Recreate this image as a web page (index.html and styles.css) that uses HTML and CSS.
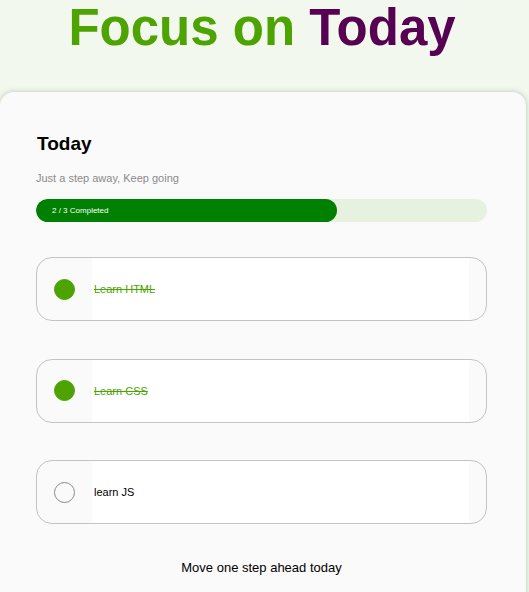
FILE: index.html
```html
<!DOCTYPE html>
<html>
<head>
<meta charset="utf-8">
<link rel="stylesheet" href="styles.css">
</head>
<body>
<h1 class="title"><span class="green">Focus on</span> <span class="purple">Today</span></h1>
<main class="card">
  <h2 class="card-title">Today</h2>
  <p class="subtitle">Just a step away, Keep going</p>
  <div class="progress">
    <div class="progress-fill" style="width: 66.67%"><span class="progress-label">2 / 3 Completed</span></div>
  </div>
  <div class="tasks">
    <div class="task done">
      <span class="check"></span>
      <div class="task-input">Learn HTML</div>
    </div>
    <div class="task done">
      <span class="check"></span>
      <div class="task-input">Learn CSS</div>
    </div>
    <div class="task">
      <span class="check"></span>
      <div class="task-input">learn JS</div>
    </div>
  </div>
  <p class="quote">Move one step ahead today</p>
</main>
</body>
</html>
```
FILE: styles.css
```css
html, body {
  margin: 0;
  padding: 0;
}
body {
  background: #f2f8ee;
  font-family: "Liberation Sans", Arial, sans-serif;
  height: 592px;
  overflow: hidden;
}
.title {
  margin: 0;
  padding-top: 0;
  width: 524px;
  text-align: center;
  font-size: 51px;
  line-height: 56px;
  font-weight: 700;
  height: 92px;
}
.green { color: #4da300; }
.purple { color: #560152; }
.card {
  width: 526px;
  box-sizing: border-box;
  background: #fafafa;
  border-radius: 14px 14px 0 0;
  box-shadow: 0 0 4px 1px rgba(120, 140, 110, 0.35);
  padding: 40px 39px 40px 36px;
  min-height: 520px;
}
.card-title {
  margin: 0 0 0 1px;
  font-size: 19px;
  line-height: 24px;
  font-weight: 700;
  color: #000;
}
.subtitle {
  margin: 15px 0 0 0;
  font-size: 11px;
  line-height: 14px;
  font-weight: 400;
  color: #8a8a8a;
}
.progress {
  margin-top: 14px;
  height: 23px;
  border-radius: 12px;
  background: #e6f2df;
  overflow: hidden;
}
.progress-fill {
  height: 100%;
  background: #008000;
  border-radius: 12px;
  display: flex;
  align-items: center;
  padding-left: 16px;
  box-sizing: border-box;
}
.progress-label {
  color: #fff;
  font-size: 8px;
  font-weight: 400;
}
.tasks {
  margin-top: 35px;
  display: flex;
  flex-direction: column;
  gap: 37.5px;
}
.task {
  height: 64px;
  box-sizing: border-box;
  border: 1px solid #c4c4c4;
  border-radius: 16px;
  background: #fafafa;
  display: flex;
  align-items: center;
  padding-right: 17px;
}
.check {
  width: 19px;
  height: 19px;
  border-radius: 50%;
  border: 1px solid #8a8a8a;
  margin-left: 17px;
  margin-right: 17px;
  flex: none;
}
.task.done .check {
  background: #4da300;
  border-color: #4da300;
}
.task-input {
  flex: 1;
  align-self: stretch;
  background: #fff;
  display: flex;
  align-items: center;
  padding-left: 2px;
  font-size: 11px;
  color: #000;
}
.task.done .task-input {
  color: #4da300;
  text-decoration: line-through;
}
.quote {
  margin: 36px 0 0 0;
  text-align: center;
  font-size: 13px;
  color: #000;
}
```
